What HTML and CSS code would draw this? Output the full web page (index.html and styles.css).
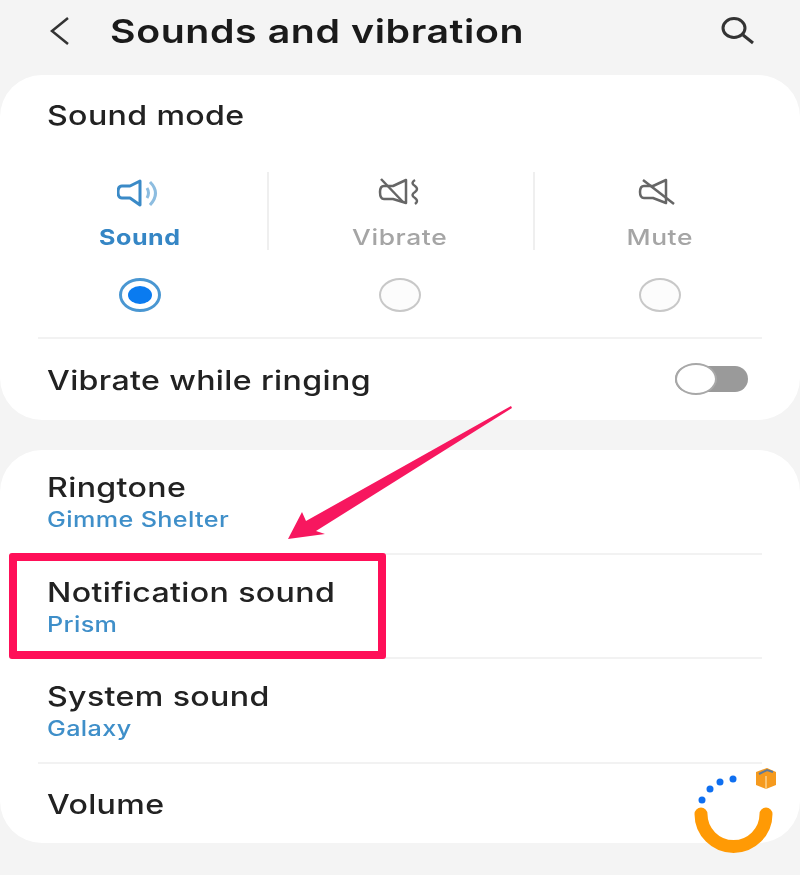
FILE: index.html
```html
<!DOCTYPE html>
<html>

<head>
    <meta charset="utf-8">
    <title>Sounds and vibration</title>
    <link rel="stylesheet" href="styles.css">
</head>

<body>
    <div class="page">
        <div class="header">
            <svg class="back" width="26" height="30" viewBox="0 0 26 30">
                <path d="M21 2 L5 15 L21 28" />
            </svg>
            <h1 class="title">Sounds and vibration</h1>
            <svg class="search" width="36" height="30" viewBox="0 0 36 30">
                <ellipse cx="14" cy="12" rx="11" ry="9.5" />
                <path d="M23 19 L33 27" />
            </svg>
        </div>

        <div class="card mode-card">
            <div class="card-title">Sound mode</div>
            <div class="modes">
                <div class="mode active">
                    <svg class="mode-icon" width="46" height="32" viewBox="0 0 46 32">
                        <path d="M23 5 L13 10 H5 Q1 10 1 16 Q1 22 5 22 H13 L23 29 Z" />
                        <path class="wave" d="M30 12 Q33 17 30 22" />
                        <path class="wave" d="M33 6 Q44 17 33 29" />
                    </svg>
                    <div class="mode-label">Sound</div>
                    <div class="radio"></div>
                </div>
                <div class="mode">
                    <svg class="mode-icon" width="46" height="32" viewBox="0 0 46 32">
                        <path d="M29 4 L16 10 H7 Q3 10 3 16 Q3 23 7 23 H16 L29 27 Z" />
                        <path d="M4 3 L26 26" />
                        <path d="M38 4 Q33 7 38 10 Q42 13 38 16 Q33 19 38 22 Q42 25 38 28" />
                    </svg>
                    <div class="mode-label">Vibrate</div>
                    <div class="radio"></div>
                </div>
                <div class="mode">
                    <svg class="mode-icon" width="46" height="32" viewBox="0 0 46 32">
                        <path d="M29 4 L16 10 H7 Q3 10 3 16 Q3 22 7 22 H16 L29 27 Z" />
                        <path d="M6 4 L37 28" />
                    </svg>
                    <div class="mode-label">Mute</div>
                    <div class="radio"></div>
                </div>
            </div>
            <div class="ring-row">
                <div class="row-title">Vibrate while ringing</div>
                <div class="toggle"><div class="knob"></div></div>
            </div>
        </div>

        <div class="card list-card">
            <div class="row">
                <div class="row-title">Ringtone</div>
                <div class="row-sub">Gimme Shelter</div>
            </div>
            <div class="row">
                <div class="row-title">Notification sound</div>
                <div class="row-sub">Prism</div>
            </div>
            <div class="row">
                <div class="row-title">System sound</div>
                <div class="row-sub">Galaxy</div>
            </div>
            <div class="row last">
                <div class="row-title">Volume</div>
            </div>
        </div>

        <!-- annotation on top of the screenshot -->
        <div class="highlight"></div>
        <svg class="arrow" width="240" height="145" viewBox="0 0 240 145">
            <polygon points="231,3 232,5 36,128 45,131 8,136 22,109 26,118" />
        </svg>

        <svg class="logo" width="90" height="90" viewBox="0 0 90 90">
            <path class="logo-arc" d="M12 49 A32.500 32.500 0 0 0 77 49" />
            <circle class="logo-dot" cx="13" cy="35" r="3.500" />
            <circle class="logo-dot" cx="21" cy="24" r="3.500" />
            <circle class="logo-dot" cx="31" cy="17" r="3.500" />
            <circle class="logo-dot" cx="44" cy="14" r="3.500" />
            <polygon class="logo-box" points="67,7 78,3 87,7 87,20 77,24 67,20" />
            <path class="logo-box-top" d="M70 9 L78 5 L84 7" />
            <path class="logo-box-edge" d="M77 11 V24" />
        </svg>
    </div>
</body>

</html>
```

FILE: styles.css
```css
*{
    padding: 0;
    margin: 0;
    box-sizing: border-box;
}
html,body{
    width: 100%;
    height: 100%;
    overflow: hidden;
}
body{
    background-color: #f4f4f4;
    font-family: "Inter", "Liberation Sans", sans-serif;
    color: #222;
}
.page{
    position: relative;
    width: 800px;
    height: 875px;
    overflow: hidden;
    filter: blur(0.4px);
}

/* header */
.header{
    display: flex;
    align-items: center;
    justify-content: space-between;
    height: 75px;
    padding: 0 44px 14px 47px;
}
.back path{
    fill: none;
    stroke: #333;
    stroke-width: 2.5;
}
.title{
    margin-left: 37px;
    margin-right: auto;
    font-size: 33px;
    font-weight: 600;
    letter-spacing: 0.500px;
    color: #1a1a1a;
    /* the screenshot is stretched sideways */
    transform: scaleX(1.19);
    transform-origin: left;
}
.search ellipse,
.search path{
    fill: none;
    stroke: #333;
    stroke-width: 3;
}

/* cards */
.card{
    background-color: #fff;
    border-radius: 42px;
}
.mode-card{
    height: 345px;
    padding-top: 21px;
}
.list-card{
    height: 393px;
    margin-top: 30px;
}
.card-title{
    width: fit-content;
    margin-left: 47px;
    font-size: 27px;
    font-weight: 500;
    line-height: 40px;
    letter-spacing: 0.300px;
    transform: scaleX(1.19);
    transform-origin: left;
}

/* sound modes */
.modes{
    display: flex;
    margin: 36px 0 0 10px;
    padding-bottom: 25px;
}
.mode{
    position: relative;
    width: 260px;
    display: flex;
    flex-direction: column;
    align-items: center;
    color: #a5a5a5;
}
.mode + .mode::before{
    content: "";
    position: absolute;
    left: -3px;
    top: 0;
    width: 2px;
    height: 78px;
    background-color: #efefef;
}
.mode:last-child::before{
    left: 3px;
}
.mode-icon{
    margin-top: 4px;
}
.mode-icon path{
    fill: none;
    stroke: #666;
    stroke-width: 2.5;
    stroke-linejoin: round;
}
.mode.active .mode-icon path{
    stroke: #3a8ac7;
    stroke-width: 3;
}
.mode.active .mode-icon .wave{
    stroke: #8dbde0;
}
.mode-label{
    margin-top: 13px;
    font-size: 22px;
    font-weight: 500;
    line-height: 32px;
    letter-spacing: 0.500px;
    transform: scaleX(1.2);
}
.mode.active .mode-label{
    color: #3586c5;
    font-weight: 700;
    transform: scaleX(1.14);
}
.radio{
    width: 42px;
    height: 34px;
    margin-top: 25px;
    border: 2px solid #c8c8c8;
    border-radius: 50%;
    background-color: #fcfcfc;
}
.mode.active .radio{
    border: 3px solid #4a97d2;
    background-color: #fff;
    position: relative;
}
.mode.active .radio::after{
    content: "";
    position: absolute;
    left: 6px;
    top: 5px;
    width: 24px;
    height: 18px;
    border-radius: 50%;
    background-color: #0a7bf0;
}

/* vibrate row */
.ring-row{
    display: flex;
    align-items: center;
    justify-content: space-between;
    height: 82px;
    margin: 0 38px;
    padding: 0 14px 0 9px;
    border-top: 2px solid #f2f2f2;
}
.ring-row .row-title{
    margin-top: 3px;
}
.toggle{
    position: relative;
    width: 73px;
    height: 26px;
    border-radius: 13px;
    background-color: #9a9a9a;
}
.knob{
    position: absolute;
    left: 0;
    top: -3px;
    width: 42px;
    height: 32px;
    border: 2px solid #a8a8a8;
    border-radius: 50%;
    background-color: #fff;
}

/* list */
.row{
    height: 104.500px;
    margin: 0 38px;
    padding: 18px 0 0 9px;
    border-bottom: 2px solid #f2f2f2;
}
.row.last{
    height: 80px;
    padding-top: 21px;
    border-bottom: 0;
}
.row-title{
    width: fit-content;
    font-size: 27px;
    font-weight: 500;
    line-height: 40px;
    letter-spacing: 0.300px;
    transform: scaleX(1.19);
    transform-origin: left;
}
.row-sub{
    width: fit-content;
    font-size: 21px;
    font-weight: 500;
    line-height: 24px;
    letter-spacing: 0.300px;
    color: #3f8fc9;
    transform: scaleX(1.2);
    transform-origin: left;
}

/* annotation */
.highlight{
    position: absolute;
    left: 9px;
    top: 553px;
    width: 377px;
    height: 106px;
    border: 8px solid #ff0f58;
    border-radius: 3px;
}
.arrow{
    position: absolute;
    left: 280px;
    top: 403px;
}
.arrow polygon{
    fill: #f7175f;
}

/* watermark */
.logo{
    position: absolute;
    left: 689px;
    top: 765px;
}
.logo-arc{
    fill: none;
    stroke: #ff9a05;
    stroke-width: 13;
    stroke-linecap: round;
}
.logo-dot{
    fill: #0f6ff0;
}
.logo-box{
    fill: #f59a1e;
}
.logo-box-top{
    fill: none;
    stroke: #5d7a9c;
    stroke-width: 2;
}
.logo-box-edge{
    stroke: #fbc36f;
    stroke-width: 2;
}
```
